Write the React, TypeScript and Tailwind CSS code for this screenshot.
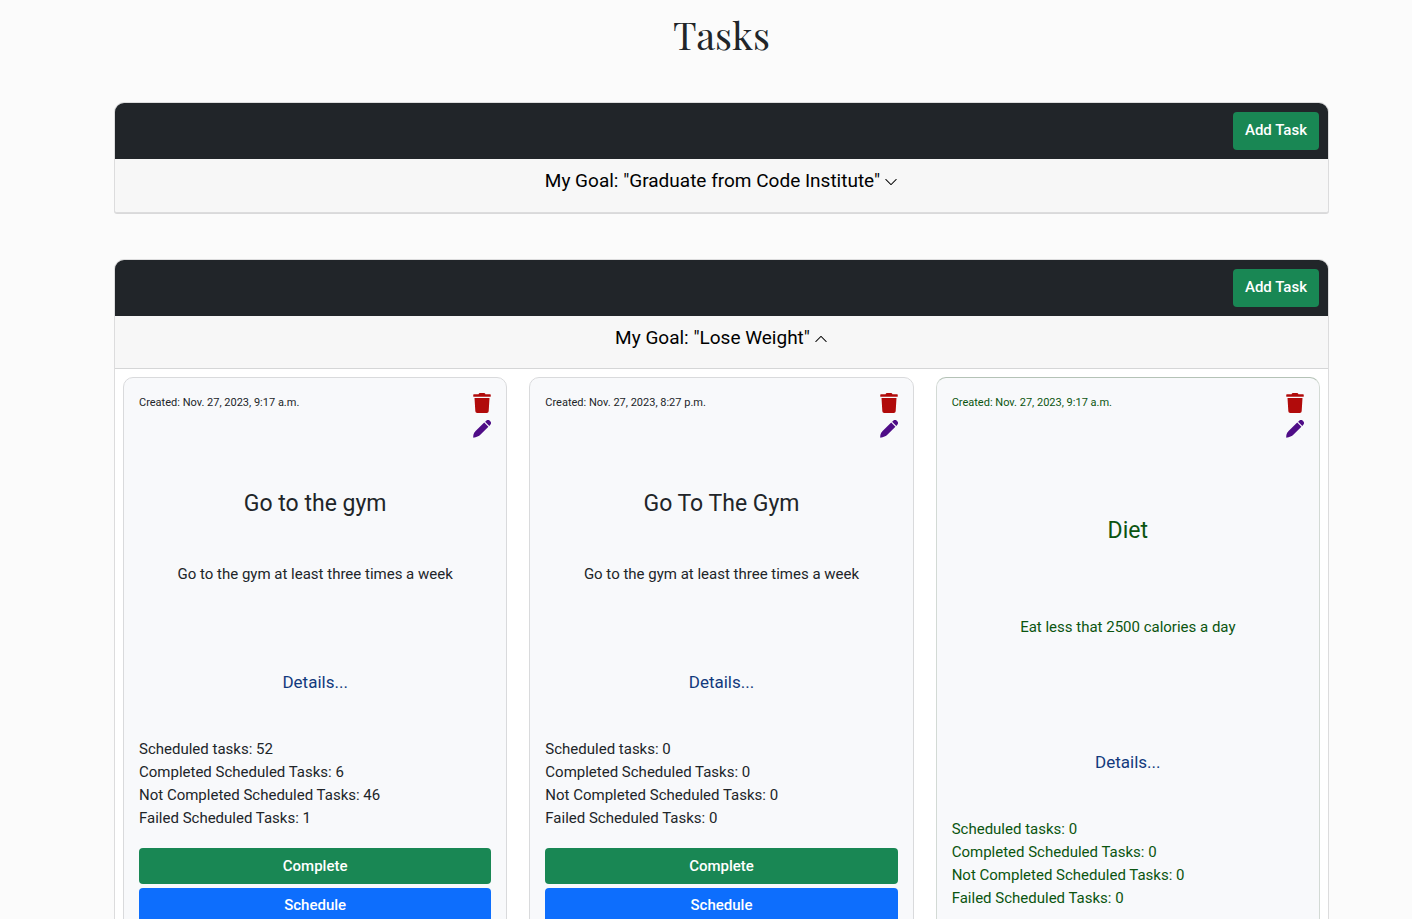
import React from "react";
import { FaTrash } from "react-icons/fa";
import { BsChevronDown, BsChevronUp } from "react-icons/bs";

type Task = {
  title: string;
  created: string;
  description: string;
  stats: [number, number, number, number];
  done?: boolean;
};

const tasks: Task[] = [
  {
    title: "Go to the gym",
    created: "Nov. 27, 2023, 9:17 a.m.",
    description: "Go to the gym at least three times a week",
    stats: [52, 6, 46, 1],
  },
  {
    title: "Go To The Gym",
    created: "Nov. 27, 2023, 8:27 p.m.",
    description: "Go to the gym at least three times a week",
    stats: [0, 0, 0, 0],
  },
  {
    title: "Diet",
    created: "Nov. 27, 2023, 9:17 a.m.",
    description: "Eat less that 2500 calories a day",
    stats: [0, 0, 0, 0],
    done: true,
  },
];

const statLabels = [
  "Scheduled tasks",
  "Completed Scheduled Tasks",
  "Not Completed Scheduled Tasks",
  "Failed Scheduled Tasks",
];

function PenIcon() {
  return (
    <svg viewBox="0 0 18 18" fill="currentColor" className="block h-[18px] w-[18px]" aria-hidden="true">
      <path d="M12.1 1.7 13 .9a2.9 2.9 0 0 1 4.1 4.1l-.8.9Z" />
      <path d="M11.2 2.6 15.4 6.8 7.6 14.6C5.9 16.3 3.4 17.3.3 17.8 0 15.9.6 12.9 2.6 11.1Z" />
    </svg>
  );
}

function TaskCard({ task }: { task: Task }) {
  return (
    <article
      className={
        "flex flex-col justify-between rounded-[10px] border bg-[#f8f9fb] px-[15px] pt-[15px] " +
        (task.done
          ? "border-[#d3dad5] border-t-[#b4c2b6] pb-[30px] text-[#0b5510]"
          : "border-[#d9dadc] pb-4 text-[#212529]")
      }
    >
      <div className="flex items-start justify-between">
        <p className="text-[11px] leading-5">Created: {task.created}</p>
        <div className="flex flex-col items-center gap-[7px]">
          <button type="button" aria-label="Delete task" className="text-[#b10b0b]">
            <FaTrash className="block h-5 w-[18px]" />
          </button>
          <button type="button" aria-label="Edit task" className="text-[#4f0d87]">
            <PenIcon />
          </button>
        </div>
      </div>
      <h2 className="mt-[50px] text-center text-[23px] leading-8">{task.title}</h2>
      <p className="mt-[42px] text-center text-[15px] leading-6">{task.description}</p>
      <div className="mt-[84px]">
        <a href="#details" className="block text-center text-[17px] leading-6 text-[#123a7d]">
          Details...
        </a>
        <ul className="mt-11 text-[15px] leading-[23px]">
          {statLabels.map((label, i) => (
            <li key={label}>
              {label}: {task.stats[i]}
            </li>
          ))}
        </ul>
        {!task.done && (
          <div className="mt-[18px] flex flex-col gap-1">
            <button type="button" className="h-9 rounded bg-[#198754] text-[15px] font-medium text-white">
              Complete
            </button>
            <button type="button" className="h-9 rounded bg-[#0d6efd] pb-[2px] text-[15px] font-medium text-white">
              Schedule
            </button>
          </div>
        )}
      </div>
    </article>
  );
}

function GoalPanel({ goal, items }: { goal: string; items?: Task[] }) {
  const Chevron = items ? BsChevronUp : BsChevronDown;
  return (
    <section className="overflow-hidden rounded-t-[10px] rounded-b-[3px] border border-[#dcdcdd] bg-white shadow-[0_1px_0_#d9d9da]">
      <div className="flex justify-end bg-[#212529] p-[9px]">
        <button type="button" className="h-[38px] rounded bg-[#198754] px-3 pb-[2px] text-[15px] font-medium text-white">
          Add Task
        </button>
      </div>
      <button
        type="button"
        aria-expanded={Boolean(items)}
        className={
          "flex h-[53px] w-full items-start justify-center gap-1 bg-[#f7f7f7] pt-[10px] text-[19px] leading-6 text-black " +
          (items ? "border-b border-[#d5d6d7]" : "")
        }
      >
        <span>My Goal: "{goal}"</span>
        <Chevron className="mt-[6px] h-[14px] w-[14px]" />
      </button>
      {items && (
        <div className="grid grid-cols-3 gap-[22px] p-2">
          {items.map((task) => (
            <TaskCard key={task.title} task={task} />
          ))}
        </div>
      )}
    </section>
  );
}

export default function App() {
  return (
    <main className="min-h-screen bg-[#fbfbfb] pr-[83px] pb-12 pl-[114px] font-[Roboto,sans-serif]">
      <h1 className="pt-3 text-center font-['Playfair_Display','Liberation_Serif',serif] text-[38px] leading-[46px] text-[#212529]">
        Tasks
      </h1>
      <div className="mt-11 flex flex-col gap-[46px]">
        <GoalPanel goal="Graduate from Code Institute" />
        <GoalPanel goal="Lose Weight" items={tasks} />
      </div>
    </main>
  );
}
